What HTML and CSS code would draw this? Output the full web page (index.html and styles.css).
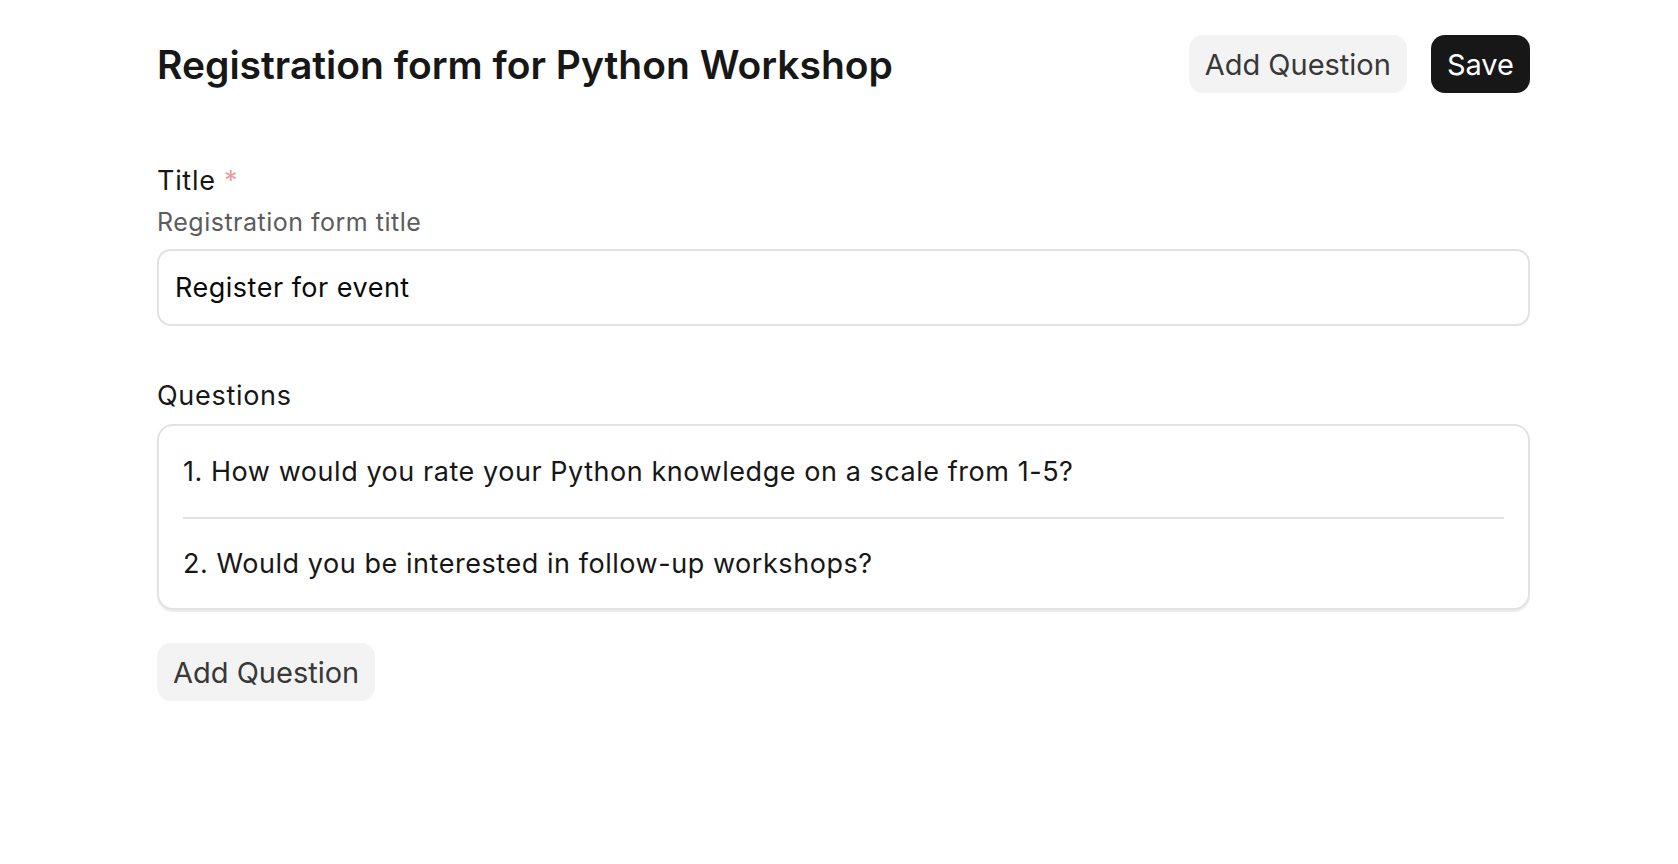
FILE: index.html
```html
<!DOCTYPE html>
<html>
<head>
<meta charset="utf-8">
<link rel="stylesheet" href="styles.css">
</head>
<body>
<div class="page">
  <header class="header">
    <h1 class="heading">Registration form for Python Workshop</h1>
    <div class="actions">
      <button class="btn btn-subtle">Add Question</button>
      <button class="btn btn-solid">Save</button>
    </div>
  </header>

  <section class="field">
    <div class="label">Title <span class="req">*</span></div>
    <div class="desc">Registration form title</div>
    <div class="input">Register for event</div>
  </section>

  <section class="field questions-field">
    <div class="label">Questions</div>
    <div class="qbox">
      <div class="qitem">1. How would you rate your Python knowledge on a scale from 1-5?</div>
      <div class="qitem">2. Would you be interested in follow-up workshops?</div>
    </div>
    <div class="below">
      <button class="btn btn-subtle">Add Question</button>
    </div>
  </section>
</div>
</body>
</html>
```

FILE: styles.css
```css
* { box-sizing: border-box; }
html, body { margin: 0; padding: 0; background: #fff; }
body {
  font-family: "Inter", "Noto Sans", sans-serif;
  color: #171717;
}
.page {
  margin-left: 157px;
  width: 1373px;
  padding-top: 35px;
}
.header {
  display: flex;
  align-items: center;
  justify-content: space-between;
  height: 58px;
}
.heading {
  margin: 0;
  font-size: 39px;
  font-weight: 600;
  color: #171717;
}
.actions {
  display: flex;
  gap: 24px;
}
.btn {
  font-family: inherit;
  border: none;
  height: 58px;
  padding: 0 16px;
  border-radius: 14px;
  font-size: 29px;
  cursor: pointer;
}
.btn-subtle { background: #f3f3f3; color: #383838; }
.btn-solid { background: #171717; color: #fff; padding: 0 16px; }

.field { margin-top: 70px; }
.label { font-size: 27px; letter-spacing: 0.7px; line-height: 36px; color: #171717; }
.req { color: #e79f9f; }
.desc { font-size: 25px; letter-spacing: 0.5px; line-height: 32px; color: #5c5c5c; margin-top: 7px; }
.input {
  margin-top: 11px;
  height: 77px;
  border: 2px solid #e2e2e2;
  border-radius: 14px;
  padding: 0 16px;
  display: flex;
  align-items: center;
  font-size: 27px;
  letter-spacing: 0.5px;
  color: #0a0a0a;
}
.questions-field { margin-top: 52px; }
.qbox {
  margin-top: 10px;
  border: 2px solid #e2e2e2;
  border-radius: 16px;
  box-shadow: 0 2px 1px rgba(0,0,0,0.08);
  padding: 0 24px;
}
.qitem {
  height: 91px;
  display: flex;
  align-items: center;
  font-size: 27px;
  letter-spacing: 0.55px;
  color: #171717;
}
.qitem + .qitem { border-top: 2px solid #e2e2e2; }
.below { margin-top: 33px; }
```
